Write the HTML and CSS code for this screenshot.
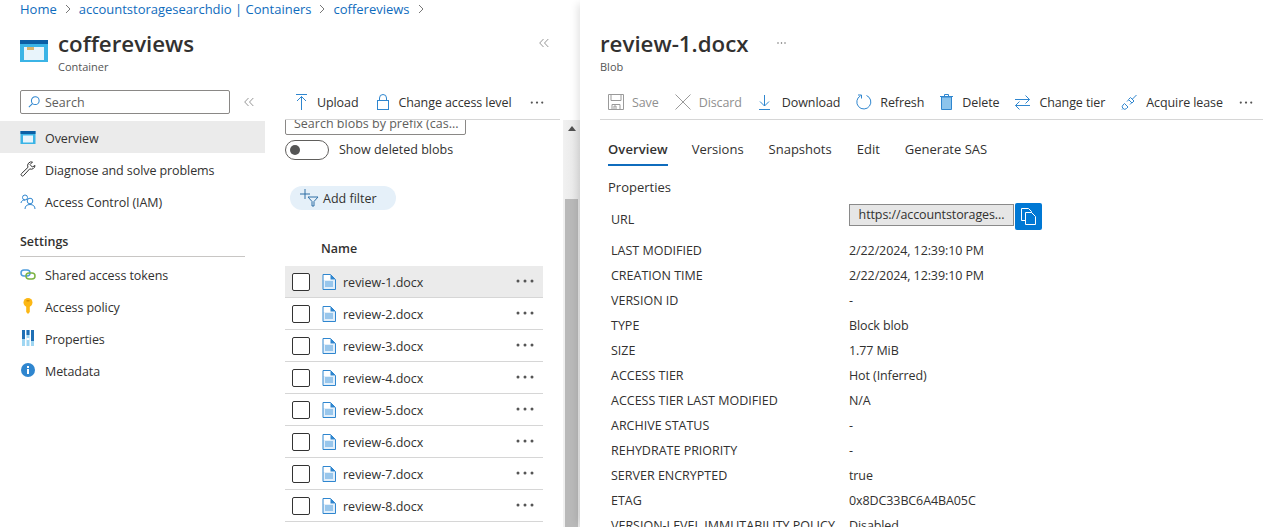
FILE: index.html
```html
<!DOCTYPE html>
<html lang="en">
<head>
  <meta charset="UTF-8" />
  <meta name="viewport" content="width=device-width, initial-scale=1.0" />
  <title>review-1.docx - Microsoft Azure</title>
  <link rel="stylesheet" href="styles.css">
</head>
<body>
  <svg class="defs" width="0" height="0">
    <symbol id="doc" viewBox="0 0 14 16">
      <path d="M1 .5h7.500l5 5v10H1z" fill="#fff"/>
      <path d="M8.500.5v5h5z" fill="#2f86cf"/>
      <path d="M1 6h12.500v9.500H1z" fill="#d5e8f8" opacity=".7"/>
      <path d="M3 8h8M3 10h8M3 12h8" stroke="#4f9ddd" fill="none"/>
      <path d="M1 .5h7.500l5 5v10H1z" fill="none" stroke="#2f86cf"/>
    </symbol>
    <symbol id="dots" viewBox="0 0 18 4">
      <circle cx="2" cy="2" r="1.500"/><circle cx="9" cy="2" r="1.500"/><circle cx="16" cy="2" r="1.500"/>
    </symbol>
    <symbol id="chev" viewBox="0 0 10 10">
      <path d="M4.500 1L.7 5l3.800 4M9.300 1L5.500 5l3.800 4" fill="none" stroke="#8a8a8a" stroke-width=".9"/>
    </symbol>
  </svg>

  <div class="page">
    <div class="main">
      <nav class="crumbs">
        <a>Home</a><svg class="sep" width="6" height="10" viewBox="0 0 6 10"><path d="M1 1l4 4-4 4" fill="none" stroke="#777"/></svg><a>accountstoragesearchdio | Containers</a><svg class="sep" width="6" height="10" viewBox="0 0 6 10"><path d="M1 1l4 4-4 4" fill="none" stroke="#777"/></svg><a>coffereviews</a><svg class="sep" width="6" height="10" viewBox="0 0 6 10"><path d="M1 1l4 4-4 4" fill="none" stroke="#777"/></svg>
      </nav>
      <header class="blade-head">
        <svg class="head-icon" width="28" height="22" viewBox="0 0 28 22">
          <rect width="28" height="22" fill="#3bb4e6"/>
          <rect width="28" height="4" fill="#0b5fa5"/>
          <rect x="4" y="7" width="20" height="13" fill="#e8f4fb"/>
          <rect x="7" y="7" width="7" height="3" fill="#d9b36a"/>
        </svg>
        <div class="head-text">
          <h1>coffereviews</h1>
          <div class="sub">Container</div>
        </div>
        <svg class="head-collapse" width="10" height="10"><use href="#chev"/></svg>
      </header>

      <div class="columns">
        <aside class="menu">
          <div class="menu-search">
            <div class="search-box">
              <svg width="12" height="12" viewBox="0 0 14 14" fill="none" stroke="#2f86cf" stroke-width="1.200"><circle cx="8.500" cy="5.500" r="4.500"/><path d="M5.200 8.800L1 13"/></svg>
              <span>Search</span>
            </div>
            <svg width="10" height="10"><use href="#chev"/></svg>
          </div>
          <a class="menu-item active">
            <svg width="15" height="13" viewBox="0 0 15 13"><rect width="15" height="13" fill="#3bb4e6"/><rect width="15" height="3" fill="#0b5fa5"/><rect x="2.500" y="4.500" width="10" height="7" fill="#e8f4fb"/></svg>
            <span>Overview</span>
          </a>
          <a class="menu-item">
            <svg width="16" height="16" viewBox="0 0 16 16" fill="none" stroke="#333"><path d="M15 4.500a3.800 3.800 0 0 1-5.300 3.400L3.500 14.600a1.400 1.400 0 0 1-2-2L8 6.300A3.800 3.800 0 0 1 12.500 1L10 3.600 12.300 6z"/></svg>
            <span>Diagnose and solve problems</span>
          </a>
          <a class="menu-item">
            <svg width="16" height="15" viewBox="0 0 16 15" fill="none" stroke="#2f86cf"><circle cx="5" cy="3.500" r="2.500"/><path d="M1 9c0-2 2-3 4-3"/><circle cx="10" cy="7" r="2.800"/><path d="M5 15c0-3 2-4.500 5-4.500s5 1.500 5 4.500"/></svg>
            <span>Access Control (IAM)</span>
          </a>
          <div class="menu-section">Settings</div>
          <a class="menu-item">
            <svg width="16" height="11" viewBox="0 0 16 11" fill="none" stroke-width="1.500"><rect x="1" y="1" width="9" height="6" rx="3" stroke="#4f9ddd"/><rect x="6" y="4" width="9" height="6" rx="3" stroke="#7cb342"/></svg>
            <span>Shared access tokens</span>
          </a>
          <a class="menu-item">
            <svg width="16" height="16" viewBox="0 0 16 16"><circle cx="8" cy="4.500" r="4.500" fill="#fcb714"/><path d="M6.200 7h3.600v7L8 16l-1.800-2z" fill="#fcb714"/><rect x="6.500" y="2" width="3" height="1.500" fill="#d98e00"/></svg>
            <span>Access policy</span>
          </a>
          <a class="menu-item">
            <svg width="14" height="16" viewBox="0 0 14 16"><path d="M1 0h3v16H1zM5.500 0h3v16h-3zM10 0h3v16h-3z" fill="#9fd6f2"/><path d="M1 0h3v9H1zM5.500 0h3v5h-3zM10 0h3v11h-3z" fill="#1f6fb5"/><path d="M5.500 8h3v2h-3z" fill="#fff"/></svg>
            <span>Properties</span>
          </a>
          <a class="menu-item">
            <svg width="14" height="14" viewBox="0 0 14 14"><circle cx="7" cy="7" r="7" fill="#2f86cf"/><rect x="6" y="6" width="2" height="5" fill="#fff"/><rect x="6" y="3" width="2" height="2" fill="#fff"/></svg>
            <span>Metadata</span>
          </a>
        </aside>

        <section class="blobs">
          <div class="blobs-body">
            <div class="toolbar blobs-toolbar">
              <a class="tool gap-10">
                <svg width="11" height="16" viewBox="0 0 11 16" fill="none" stroke="#2f86cf"><path d="M0 .5h11M5.500 16V2.500M1 7l4.500-4.500L10 7"/></svg>
                Upload
              </a>
              <a class="tool gap-9">
                <svg width="12" height="16" viewBox="0 0 12 16" fill="none" stroke="#2f86cf"><rect x=".5" y="6.500" width="11" height="9"/><path d="M2.500 6.500V4a3.500 3.500 0 0 1 7 0v2.500"/></svg>
                Change access level
              </a>
              <svg width="14" height="3" viewBox="0 0 18 4" fill="#555"><use href="#dots"/></svg>
            </div>
            <div class="prefix-clip"><div class="prefix">Search blobs by prefix (cas...</div></div>
            <div class="toggle-row">
              <span class="toggle"></span>
              <span class="toggle-label">Show deleted blobs</span>
            </div>
            <a class="add-filter">
              <svg width="19" height="18" viewBox="0 0 19 18" fill="none" stroke="#2f6ea5"><path d="M0 5h10M5 0v10"/><path d="M8 8h10l-4 4.500V17h-2v-4.500z" /></svg>
              Add filter
            </a>
            <div class="list-head">Name</div>
            <div class="blob-row selected"><span class="check"></span><svg width="14" height="16"><use href="#doc"/></svg><span class="blob-name">review-1.docx</span><svg class="row-dots" width="18" height="4" fill="#555"><use href="#dots"/></svg></div>
            <div class="blob-row"><span class="check"></span><svg width="14" height="16"><use href="#doc"/></svg><span class="blob-name">review-2.docx</span><svg class="row-dots" width="18" height="4" fill="#555"><use href="#dots"/></svg></div>
            <div class="blob-row"><span class="check"></span><svg width="14" height="16"><use href="#doc"/></svg><span class="blob-name">review-3.docx</span><svg class="row-dots" width="18" height="4" fill="#555"><use href="#dots"/></svg></div>
            <div class="blob-row"><span class="check"></span><svg width="14" height="16"><use href="#doc"/></svg><span class="blob-name">review-4.docx</span><svg class="row-dots" width="18" height="4" fill="#555"><use href="#dots"/></svg></div>
            <div class="blob-row"><span class="check"></span><svg width="14" height="16"><use href="#doc"/></svg><span class="blob-name">review-5.docx</span><svg class="row-dots" width="18" height="4" fill="#555"><use href="#dots"/></svg></div>
            <div class="blob-row"><span class="check"></span><svg width="14" height="16"><use href="#doc"/></svg><span class="blob-name">review-6.docx</span><svg class="row-dots" width="18" height="4" fill="#555"><use href="#dots"/></svg></div>
            <div class="blob-row"><span class="check"></span><svg width="14" height="16"><use href="#doc"/></svg><span class="blob-name">review-7.docx</span><svg class="row-dots" width="18" height="4" fill="#555"><use href="#dots"/></svg></div>
            <div class="blob-row"><span class="check"></span><svg width="14" height="16"><use href="#doc"/></svg><span class="blob-name">review-8.docx</span><svg class="row-dots" width="18" height="4" fill="#555"><use href="#dots"/></svg></div>
          </div>
          <div class="scrollbar">
            <span class="scroll-arrow"></span>
            <span class="scroll-thumb"></span>
          </div>
        </section>
      </div>
    </div>

    <div class="panel">
      <header class="panel-head">
        <div class="panel-title"><h1>review-1.docx</h1><svg width="11" height="2" viewBox="0 0 18 4" fill="#666"><use href="#dots"/></svg></div>
        <div class="sub">Blob</div>
      </header>
      <div class="toolbar panel-toolbar">
        <a class="tool off">
          <svg width="16" height="16" viewBox="0 0 16 16" fill="none" stroke="#9a9a9a"><path d="M.5.500h15v15H.5z"/><path d="M3 .5v6h10v-6M4 15.500v-5h8v5M6 12h2v3.500H6z"/></svg>
          Save
        </a>
        <a class="tool off">
          <svg width="16" height="16" viewBox="0 0 16 16" fill="none" stroke="#9a9a9a"><path d="M.5.500l15 15M15.500.500l-15 15"/></svg>
          Discard
        </a>
        <a class="tool gap-11">
          <svg width="13" height="15" viewBox="0 0 13 15" fill="none" stroke="#2f86cf"><path d="M6.500 0v11M2 6.500L6.500 11 11 6.500M1 14.500h11"/></svg>
          Download
        </a>
        <a class="tool">
          <svg width="16" height="16" viewBox="0 0 16 16" fill="none" stroke="#2f86cf"><path d="M10.500 1.500a7 7 0 1 1-6 .3"/><path d="M2 1h3.500v3.500" /></svg>
          Refresh
        </a>
        <a class="tool gap-9">
          <svg width="13" height="16" viewBox="0 0 13 16"><path d="M1.500 3h10v12.500h-10z" fill="#8cc4ec" stroke="#2f86cf"/><path d="M0 2.500h13M4.500 2V.5h4V2" fill="none" stroke="#2f86cf"/></svg>
          Delete
        </a>
        <a class="tool gap-9">
          <svg width="15" height="15" viewBox="0 0 15 15" fill="none" stroke="#2f86cf"><path d="M0 4.500h14.500M10.500.5l4 4-4 4M15 10.500H.5M4.500 6.500l-4 4 4 4"/></svg>
          Change tier
        </a>
        <a class="tool">
          <svg width="17" height="16" viewBox="0 0 16 16" fill="none" stroke="#2f86cf"><path d="M9 3.500l3.500 3.500-2 2L7 5.500zM11 5l4-4M3 9.500L6.500 13l-1.500 1.500a2 2 0 0 1-3.500-3.500zM1.500 14.500l-1 1M5.500 7.500L7 6M8.500 10.500L10 9"/></svg>
          Acquire lease
        </a>
        <svg width="14" height="3" viewBox="0 0 18 4" fill="#555"><use href="#dots"/></svg>
      </div>
      <nav class="tabs">
        <a class="tab current">Overview</a>
        <a class="tab">Versions</a>
        <a class="tab">Snapshots</a>
        <a class="tab">Edit</a>
        <a class="tab">Generate SAS</a>
      </nav>
      <h2 class="props-title">Properties</h2>
      <div class="url-row">
        <span class="prop-label">URL</span>
        <div class="url-value">
          <span class="url-field">https://accountstorages...</span>
          <a class="copy-btn">
            <svg width="15" height="17" viewBox="0 0 15 17" fill="#0078d4" stroke="#fff"><path d="M.5.500h7l3 3v9h-10z"/><path d="M4.500 4.500h6l4 4v8h-10z"/></svg>
          </a>
        </div>
      </div>
      <dl class="props">
        <dt>LAST MODIFIED</dt><dd>2/22/2024, 12:39:10 PM</dd>
        <dt>CREATION TIME</dt><dd>2/22/2024, 12:39:10 PM</dd>
        <dt>VERSION ID</dt><dd>-</dd>
        <dt>TYPE</dt><dd>Block blob</dd>
        <dt>SIZE</dt><dd>1.77 MiB</dd>
        <dt>ACCESS TIER</dt><dd>Hot (Inferred)</dd>
        <dt>ACCESS TIER LAST MODIFIED</dt><dd>N/A</dd>
        <dt>ARCHIVE STATUS</dt><dd>-</dd>
        <dt>REHYDRATE PRIORITY</dt><dd>-</dd>
        <dt>SERVER ENCRYPTED</dt><dd>true</dd>
        <dt>ETAG</dt><dd>0x8DC33BC6A4BA05C</dd>
        <dt>VERSION-LEVEL IMMUTABILITY POLICY</dt><dd>Disabled</dd>
      </dl>
    </div>
  </div>
</body>
</html>
```

FILE: styles.css
```css
html, body {
  margin: 0;
  height: 527px;
  overflow: hidden;
  background: #fff;
}
body {
  font-family: "Open Sans", "Noto Sans", Arial, sans-serif;
  font-size: 12.5px;
  color: #323130;
}
h1, h2, dl, dd {
  margin: 0;
}
.defs {
  position: absolute;
}
.page {
  display: flex;
  height: 527px;
  overflow: hidden;
}
.main {
  width: 580px;
  flex: none;
}

/* breadcrumb + header */
.crumbs {
  height: 18px;
  padding-left: 20px;
  display: flex;
  align-items: center;
  color: #0f6cbd;
  font-size: 13px;
  white-space: nowrap;
}
.sep {
  margin: 0 8px;
}
.blade-head {
  display: flex;
  align-items: flex-start;
  height: 72px;
  padding-left: 20px;
}
.head-icon {
  margin-top: 22px;
  margin-right: 10px;
}
.head-text {
  padding-top: 9px;
}
.blade-head h1, .panel-title h1 {
  font-size: 22.3px;
  font-weight: 600;
  padding-top: 1px;
  line-height: 31px;
}
.sub {
  font-size: 11px;
  line-height: 16px;
  color: #555;
  margin-top: 0;
}
.head-collapse {
  margin-left: auto;
  margin-right: 31px;
  margin-top: 20px;
}

/* left menu */
.columns {
  display: flex;
  height: 437px;
}
.menu {
  width: 265px;
  flex: none;
}
.menu-search {
  display: flex;
  align-items: center;
  gap: 14px;
  padding-left: 20px;
  margin-bottom: 7px;
}
.search-box {
  box-sizing: border-box;
  width: 210px;
  height: 24px;
  border: 1px solid #8a8886;
  border-radius: 2px;
  display: flex;
  align-items: center;
  gap: 5px;
  padding-left: 7px;
  color: #605e5c;
}
.menu-item {
  display: flex;
  align-items: center;
  height: 32px;
  padding-left: 20px;
  white-space: nowrap;
  letter-spacing: -0.08px;
}
.menu-item span {
  padding-top: 2px;
}
.menu-item svg {
  width: 16px;
  margin-right: 9px;
  flex: none;
}
.menu-item.active {
  background: #ebebeb;
}
.menu-section {
  margin: 15px 20px 1px;
  padding: 1px 0 6px;
  height: 17px;
  line-height: 17px;
  font-weight: 600;
  border-bottom: 1px solid #c8c6c4;
}

/* blob list */
.blobs {
  flex: 1;
  display: flex;
  min-width: 0;
}
.blobs-body {
  width: 298px;
  flex: none;
  padding-left: 20px;
  box-sizing: border-box;
}
.toolbar {
  display: flex;
  align-items: center;
  height: 30px;
  box-sizing: border-box;
  padding-bottom: 5px;
  border-bottom: 1px solid #d6d6d6;
  white-space: nowrap;
  letter-spacing: -0.1px;
}
.tool {
  display: flex;
  align-items: center;
  gap: 8px;
}
.tool.gap-9 {
  gap: 9px;
}
.tool.gap-10 {
  gap: 10px;
}
.tool.gap-11 {
  gap: 11px;
}
.tool.off {
  color: #8f8f8f;
}
.blobs-toolbar {
  margin-right: 3px;
  padding-left: 11px;
  gap: 19px;
}
.prefix-clip {
  height: 15px;
  overflow: hidden;
}
.prefix {
  box-sizing: border-box;
  width: 181px;
  height: 24px;
  margin-top: -9px;
  padding-left: 8px;
  line-height: 23px;
  border: 1px solid #8a8886;
  border-radius: 2px;
  color: #605e5c;
  white-space: nowrap;
}
.toggle-row {
  display: flex;
  align-items: center;
  gap: 10px;
  margin-top: 5px;
  height: 20px;
}
.toggle-label {
  margin-top: -2px;
}
.toggle {
  box-sizing: border-box;
  width: 44px;
  height: 20px;
  border: 1px solid #605e5c;
  border-radius: 10px;
  display: flex;
  align-items: center;
  padding-left: 4px;
}
.toggle::before {
  content: "";
  width: 10px;
  height: 10px;
  border-radius: 50%;
  background: #555;
}
.add-filter {
  display: flex;
  align-items: center;
  gap: 4px;
  box-sizing: border-box;
  width: 106px;
  height: 24px;
  margin: 26px 0 0 5px;
  padding-left: 10px;
  border-radius: 12px;
  background: #e5f0f9;
}
.list-head {
  font-weight: 600;
  margin: 30px 0 9px 36px;
  height: 17px;
  line-height: 17px;
}
.blob-row {
  display: flex;
  align-items: center;
  width: 258px;
  height: 32px;
  box-sizing: border-box;
  padding-left: 7px;
  border-bottom: 1px solid #d6d6d6;
}
.blob-row.selected {
  background: #ebebeb;
}
.check {
  box-sizing: border-box;
  width: 18px;
  height: 18px;
  border: 1px solid #333;
  border-radius: 2px;
  margin-right: 12px;
  background: #fff;
}
.blob-name {
  margin-left: 7px;
  padding-top: 2px;
}
.row-dots {
  margin-left: auto;
  margin-right: 9px;
  margin-top: -2px;
}
.scrollbar {
  width: 17px;
  margin-top: 30px;
  background: linear-gradient(to right, #f1f1f1, #e6e6e6);
  display: flex;
  flex-direction: column;
  align-items: center;
}
.scroll-arrow {
  width: 0;
  height: 0;
  margin-top: 6px;
  border: 4px solid transparent;
  border-top: 0;
  border-bottom: 5px solid #505050;
}
.scroll-thumb {
  width: 13px;
  flex: 1;
  margin-top: 68px;
  background: #b9b9b9;
}

/* blob panel */
.panel {
  flex: 1;
  min-width: 0;
  padding-left: 20px;
  box-shadow: -6px 0 8px -4px rgba(0, 0, 0, 0.12);
  background: #fff;
  position: relative;
}
.panel-head {
  height: 90px;
  box-sizing: border-box;
  padding-top: 27px;
}
.panel-title {
  display: flex;
  align-items: center;
  gap: 27px;
}
.panel-toolbar {
  padding-left: 8px;
  gap: 16px;
}
.tabs {
  display: flex;
  gap: 25px;
  padding: 2px 0 0 8px;
  margin-top: 18px;
  height: 27px;
  font-size: 13px;
}
.tab.current {
  font-weight: 600;
  letter-spacing: 0.1px;
  height: 26px;
  margin-right: -1px;
  box-sizing: border-box;
  border-bottom: 2px solid #0f6cbd;
}
.props-title {
  font-size: 13px;
  font-weight: 400;
  padding-left: 8px;
  margin-top: 11px;
  line-height: 18px;
}
.url-row {
  display: flex;
  align-items: center;
  margin-top: 7px;
  height: 27px;
}
.prop-label {
  width: 249px;
  padding: 5px 0 0 11px;
  box-sizing: border-box;
}
.url-value {
  display: flex;
  align-items: center;
  gap: 1px;
}
.url-field {
  box-sizing: border-box;
  width: 165px;
  height: 22px;
  line-height: 20px;
  border: 1px solid #8a8a8a;
  background: #e6e6e6;
  text-align: center;
  margin-top: -4px;
  letter-spacing: -0.1px;
}
.copy-btn {
  width: 27px;
  height: 27px;
  border-radius: 2px;
  background: #0078d4;
  display: flex;
  align-items: center;
  justify-content: center;
}
.props {
  display: grid;
  grid-template-columns: 249px 1fr;
  grid-auto-rows: 25px;
  margin-top: 8px;
  line-height: 25px;
}
.props dt {
  padding-left: 11px;
  white-space: nowrap;
}
.props dd {
  letter-spacing: -0.1px;
}
```
